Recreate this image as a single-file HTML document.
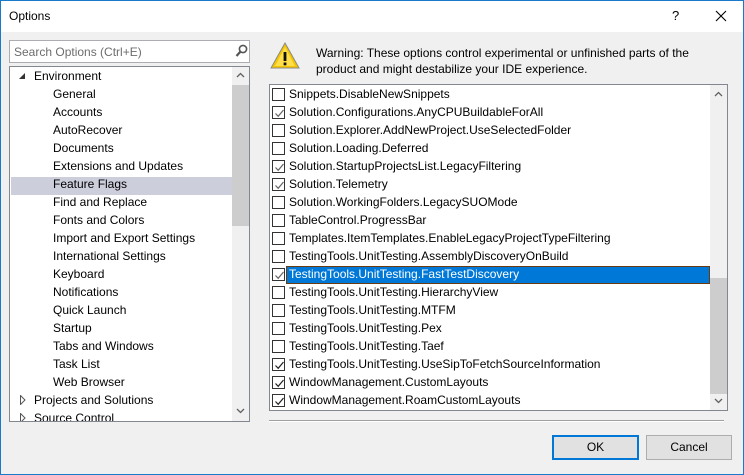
<!DOCTYPE html>
<html><head><meta charset="utf-8"><style>
*{margin:0;padding:0;box-sizing:border-box}
body{width:744px;height:475px;overflow:hidden;font-family:"Liberation Sans",sans-serif;font-size:12px;color:#000}
#w{position:absolute;left:0;top:0;width:744px;height:475px;background:#f0f0f0;border:1px solid #1979ca}
.a{position:absolute;white-space:nowrap}
#title{position:absolute;left:0;top:0;width:742px;height:31px;background:#fff}
.box{position:absolute;background:#fff;border:1px solid #828790}
.ti{position:absolute;left:0;height:18px;line-height:18px}
.cb{position:absolute;left:3px;width:13px;height:13px;border:1px solid #333;background:#fff}
.cb svg{position:absolute;left:1px;top:1px}
.btn{position:absolute;height:25px;background:#e1e1e1;border:1px solid #adadad;text-align:center;line-height:23px}
</style></head><body><div id="w">
<div id="title"><span class="a" style="left:8px;top:8px;font-size:12px">Options</span>
<span class="a" style="left:671px;top:7px;font-size:13px">?</span>
<svg class="a" style="left:714px;top:9px" width="12" height="12"><path d="M1 1L11 11M11 1L1 11" stroke="#000" stroke-width="1.1"/></svg></div>

<div class="box" style="left:8px;top:39px;width:241px;height:23px;border-color:#abadb3">
<span class="a" style="left:4px;top:4px;color:#6d6d6d">Search Options (Ctrl+E)</span>
<svg class="a" style="left:225px;top:3px" width="13" height="14"><circle cx="8" cy="5" r="3.6" fill="none" stroke="#555" stroke-width="1.6"/><path d="M5.5 7.5L1.5 12" stroke="#555" stroke-width="2.2"/></svg></div>

<div class="box" style="left:8px;top:65px;width:241px;height:356px;overflow:hidden">
<div class="a" style="left:222px;top:0;width:17px;height:354px;background:#f0f0f0"></div>
<div class="a" style="left:222px;top:18px;width:17px;height:141px;background:#cdcdcd"></div>
<svg class="a" style="left:226px;top:5px" width="9" height="6"><path d="M1 5L4.5 1.5L8 5" fill="none" stroke="#606060" stroke-width="1.3"/></svg>
<svg class="a" style="left:226px;top:341px" width="9" height="6"><path d="M1 1L4.5 4.5L8 1" fill="none" stroke="#606060" stroke-width="1.3"/></svg>
<div class="a" style="left:1px;top:110px;width:221px;height:18px;background:#cccedb"></div>
<svg class="a" style="left:9px;top:6px" width="7" height="7"><path d="M6 0L6 6L0 6Z" fill="#333"/></svg>
<div id="tree"></div>
<svg class="a" style="left:10px;top:328px" width="6" height="10"><path d="M0.5 0.5L5 5L0.5 9.5Z" fill="none" stroke="#555"/></svg>
<svg class="a" style="left:10px;top:346px" width="6" height="10"><path d="M0.5 0.5L5 5L0.5 9.5Z" fill="none" stroke="#555"/></svg>
</div>

<svg class="a" style="left:268px;top:40px" width="32" height="30"><path d="M16 2L30 27H2Z" fill="#f4c400" stroke="#8a8a8a" stroke-width="1"/><path d="M16 6L26 25H6Z" fill="#ffde4a"/><rect x="14.6" y="11" width="2.8" height="9" fill="#111"/><rect x="14.6" y="21.5" width="2.8" height="2.8" fill="#111"/></svg>
<div class="a" style="left:315px;top:44px;line-height:16px">Warning: These options control experimental or unfinished parts of the<br>product and might destabilize your IDE experience.</div>

<div class="box" style="left:268px;top:83px;width:459px;height:327px;overflow:hidden">
<div class="a" style="left:440px;top:0;width:17px;height:325px;background:#f0f0f0"></div>
<div class="a" style="left:440px;top:193px;width:17px;height:116px;background:#cdcdcd"></div>
<svg class="a" style="left:444px;top:6px" width="9" height="6"><path d="M1 5L4.5 1.5L8 5" fill="none" stroke="#606060" stroke-width="1.3"/></svg>
<svg class="a" style="left:444px;top:313px" width="9" height="6"><path d="M1 1L4.5 4.5L8 1" fill="none" stroke="#606060" stroke-width="1.3"/></svg>
<div class="a" style="left:16px;top:181px;width:424px;height:18px;background:#0078d7;border:1px solid #6b3b10"></div>
<div id="list"></div>
</div>

<div class="a" style="left:268px;top:419px;width:455px;height:1px;background:#a0a0a0"></div>
<div class="a" style="left:268px;top:420px;width:455px;height:1px;background:#fff"></div>
<div class="btn" style="left:551px;top:434px;width:87px;border:2px solid #0078d7;line-height:21px">OK</div>
<div class="btn" style="left:645px;top:434px;width:86px">Cancel</div>
</div>
<script>
var t=["Environment","General","Accounts","AutoRecover","Documents","Extensions and Updates","Feature Flags","Find and Replace","Fonts and Colors","Import and Export Settings","International Settings","Keyboard","Notifications","Quick Launch","Startup","Tabs and Windows","Task List","Web Browser","Projects and Solutions","Source Control"];
var h="";t.forEach(function(s,i){var x=(i==0||i>=18)?24:43;h+='<div class="ti" style="left:'+x+'px;top:'+(i*18)+'px">'+s+'</div>';});
document.getElementById("tree").innerHTML=h;
var L=[["Snippets.DisableNewSnippets",0],["Solution.Configurations.AnyCPUBuildableForAll",1],["Solution.Explorer.AddNewProject.UseSelectedFolder",0],["Solution.Loading.Deferred",0],["Solution.StartupProjectsList.LegacyFiltering",1],["Solution.Telemetry",1],["Solution.WorkingFolders.LegacySUOMode",0],["TableControl.ProgressBar",0],["Templates.ItemTemplates.EnableLegacyProjectTypeFiltering",0],["TestingTools.UnitTesting.AssemblyDiscoveryOnBuild",0],["TestingTools.UnitTesting.FastTestDiscovery",1],["TestingTools.UnitTesting.HierarchyView",0],["TestingTools.UnitTesting.MTFM",0],["TestingTools.UnitTesting.Pex",0],["TestingTools.UnitTesting.Taef",0],["TestingTools.UnitTesting.UseSipToFetchSourceInformation",1],["WindowManagement.CustomLayouts",1],["WindowManagement.RoamCustomLayouts",1]];
h="";L.forEach(function(r,i){var y=i*18;var sel=i==10;var dark=i>=15;
h+='<div class="cb" style="left:2px;top:'+(y+3)+'px">'+(r[1]?'<svg width="11" height="11"><path d="M1.5 5.5L4.2 8.3L9.5 2" fill="none" stroke="'+(dark?'#222':'#666')+'" stroke-width="1.2"/></svg>':'')+'</div>';
h+='<div class="ti" style="left:19px;top:'+y+'px;color:'+(sel?'#fff':'#000')+'">'+r[0]+'</div>';});
document.getElementById("list").innerHTML=h;
</script>
</body></html>
